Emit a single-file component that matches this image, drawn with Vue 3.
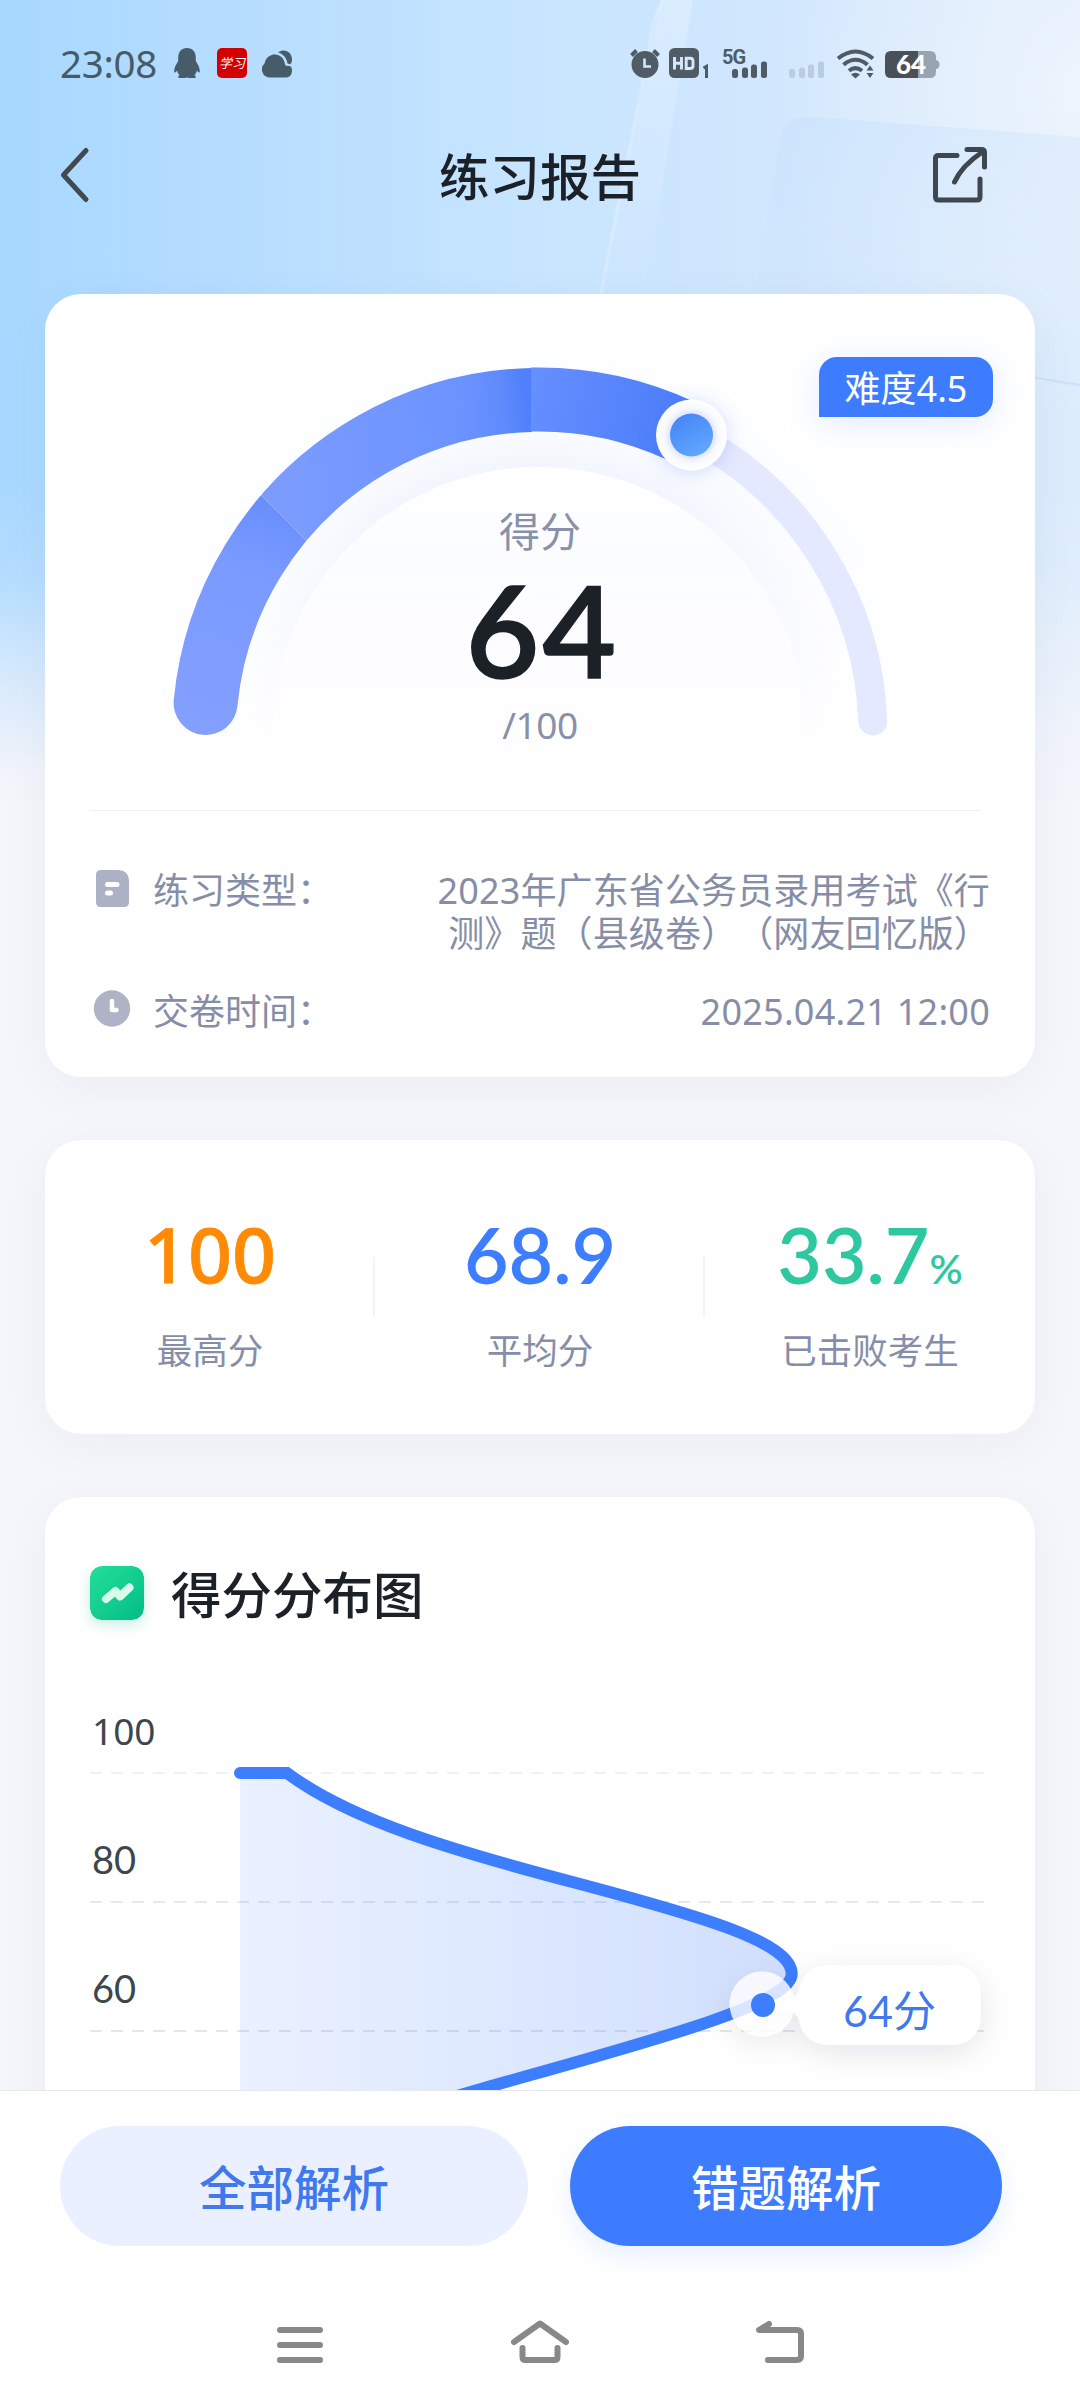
<script setup>
const stats = [
  { value: '100', unit: '', label: '最高分', tone: 'orange' },
  { value: '68.9', unit: '', label: '平均分', tone: 'blue' },
  { value: '33.7', unit: '%', label: '已击败考生', tone: 'green' }
]

const gridLines = [
  { label: '100', y: 1773, cls: 'plain', opacity: 0.55 },
  { label: '80', y: 1902, cls: 'humanist', opacity: 0.9 },
  { label: '60', y: 2031, cls: 'humanist', opacity: 1 }
]

const curve = 'M240 1773H287C350 1820 450 1850 580 1884C700 1916 791.7 1942 791.7 1974C791.7 2005 640 2044 481 2089L440 2101'
</script>

<template>
  <div class="page">
    <svg class="backdrop" viewBox="0 0 1080 800" aria-hidden="true">
      <defs>
        <linearGradient id="sky" x1="0" y1="0" x2="1" y2="0">
          <stop offset="0" stop-color="#a8d8ff" />
          <stop offset="0.18" stop-color="#b4dcff" />
          <stop offset="0.5" stop-color="#c8e5ff" />
          <stop offset="0.75" stop-color="#d2e7fd" />
          <stop offset="1" stop-color="#dcecfc" />
        </linearGradient>
        <radialGradient id="glow" gradientUnits="userSpaceOnUse" cx="1090" cy="90" r="330">
          <stop offset="0" stop-color="#f1f6fd" stop-opacity="0.8" />
          <stop offset="1" stop-color="#f1f6fd" stop-opacity="0" />
        </radialGradient>
        <linearGradient id="band" x1="0" y1="0" x2="0" y2="1">
          <stop offset="0" stop-color="#fff" stop-opacity="0.25" />
          <stop offset="1" stop-color="#fff" stop-opacity="0.02" />
        </linearGradient>
        <linearGradient id="pane" gradientUnits="userSpaceOnUse" x1="800" y1="110" x2="850" y2="330">
          <stop offset="0" stop-color="#c6e1fc" stop-opacity="0.5" />
          <stop offset="1" stop-color="#cfe5fb" stop-opacity="0.1" />
        </linearGradient>
        <linearGradient id="fade" x1="0" y1="0" x2="0" y2="1">
          <stop offset="0.6" stop-color="#f4f5fb" stop-opacity="0" />
          <stop offset="0.72" stop-color="#f4f5fb" stop-opacity="0.15" />
          <stop offset="0.86" stop-color="#f4f5fb" stop-opacity="0.65" />
          <stop offset="0.98" stop-color="#f4f5fb" stop-opacity="1" />
        </linearGradient>
      </defs>
      <rect width="1080" height="800" fill="url(#sky)" />
      <rect width="1080" height="500" fill="url(#glow)" />
      <path d="M661 0H693L645 290H600Z" fill="url(#band)" />
      <path d="M664 0C655 12 653 26 650 42C638 110 620 190 600 300" fill="none" stroke="#fff" stroke-opacity="0.22" stroke-width="3" />
      <path d="M755 300L779 142Q784 115 812 117L1080 137V388L1030 382V420H740Z" fill="url(#pane)" />
      <path d="M1030 377L1080 385" stroke="#c2dbf5" stroke-opacity="0.6" stroke-width="2" />
      <rect width="1080" height="800" fill="url(#fade)" />
    </svg>

    <main class="content">
      <div class="status">
        <div class="status-left">
          <span class="clock">23:08</span>
          <svg class="penguin" width="26" height="30" viewBox="0 0 26 30">
            <path fill="#475c69" d="M13 0C7.500 0 4.200 4 4.200 9.500V13C2 16.500 0 20 .2 23.600C.4 25.400 2 24.300 3 22.400C3.500 24.500 4.500 26 5.500 27.200C3.800 28 3.800 30 5.500 30H11L13 29.500L15 30H20.500C22.200 30 22.200 28 20.500 27.200C21.500 26 22.500 24.500 23 22.400C24 24.300 25.600 25.400 25.800 23.600C26 20 24 16.500 21.800 13V9.500C21.800 4 18.500 0 13 0Z" />
          </svg>
          <span class="study">学习</span>
          <svg class="cloud" width="30" height="29" viewBox="0 0 30 29">
            <path fill="#475c69" d="M7.500 28.500A7.500 8 0 0 1 2.500 14.500C4 8 8.500 5.500 13 5.500C18 5.500 22 9 22.800 14.500C23 16.800 25 17.300 27 16.800C29.500 17.500 30 19.500 30 21.500C30 26 27.500 28.500 23.500 28.500Z" />
            <path fill="#475c69" d="M16 3.300C23 -1 30 3 30 11C30 13 29.500 14 28.200 15.200L25.500 14.500C24.500 8.500 21 5 16 3.300Z" />
          </svg>
        </div>
        <svg class="status-right" width="312" height="32" viewBox="629 47 312 32">
          <g fill="#4f5c66">
            <circle cx="645" cy="64.500" r="13.500" />
            <path d="M631.500 55.500L636.500 50.500M658.500 55.500L653.500 50.500" stroke="#4f5c66" stroke-width="4" />
            <path d="M644.500 58.500V66.500H651" fill="none" stroke="#d4e8fd" stroke-width="2.600" />
            <rect x="669" y="48" width="30" height="30" rx="5.500" />
            <path d="M674.500 57V69.500M681.500 57V69.500M674.500 63.200H681.500M686.200 58.200H690Q693 58.200 693 61V66Q693 68.500 690 68.500H686.200Z" fill="none" stroke="#d6e8fb" stroke-width="2.900" />
            <path d="M703.500 68L706.500 66.300V78" fill="none" stroke="#4f5c66" stroke-width="3" />
            <text x="722" y="63.500" class="network">5G</text>
            <rect x="732" y="69" width="6" height="9" rx="2.500" />
            <rect x="742" y="67.500" width="6" height="10.500" rx="2.500" />
            <rect x="751" y="64.500" width="6" height="13.500" rx="2.500" />
            <rect x="761" y="61.500" width="6" height="16.500" rx="2.500" />
          </g>
          <g fill="#b8cddf">
            <rect x="789" y="69" width="6" height="9" rx="2.500" />
            <rect x="799" y="67.500" width="6" height="10.500" rx="2.500" />
            <rect x="808" y="64.500" width="6" height="13.500" rx="2.500" />
            <rect x="818" y="61.500" width="6" height="16.500" rx="2.500" />
          </g>
          <g fill="none" stroke="#4f5c66" stroke-width="4">
            <path d="M838 58.500Q855.500 44.500 873 58.500" />
            <path d="M843.500 64.800Q855.500 54.800 867.500 64.800" />
            <path d="M849 70.800Q855.500 65.500 862 70.800" />
          </g>
          <path d="M851 74.500Q855.500 71 860 74.500L855.500 78.500Z" fill="#4f5c66" />
          <path d="M870 65.500L873.500 70.500H866.500ZM866.500 73H873.500L870 78Z" fill="#4f5c66" />
          <path d="M891 51H918V78H891Q885 78 885 72V57Q885 51 891 51Z" fill="#495057" />
          <path d="M918 51H930Q936 51 936 57V60Q939.500 60.500 939.500 64.500Q939.500 68.500 936 69V72Q936 78 930 78H918Z" fill="#99a4b0" />
          <text x="911" y="74" class="battery">64</text>
        </svg>
      </div>

      <header class="navbar">
        <svg class="back" width="30" height="58" viewBox="60 146 30 58">
          <path d="M86 150.500L63.500 175L86 199.500" fill="none" stroke="#42494f" stroke-width="5" stroke-linecap="round" stroke-linejoin="round" />
        </svg>
        <h1>练习报告</h1>
        <svg class="share" width="56" height="58" viewBox="932 146 56 58">
          <g fill="none" stroke="#3e474f" stroke-width="5" stroke-linecap="round" stroke-linejoin="round">
            <path d="M957 155.500H938.500Q935.500 155.500 935.500 158.500V197Q935.500 200 938.500 200H977Q980 200 980 197V179" />
            <path d="M967 149.500H981.500Q984.500 149.500 984.500 152.500V167" />
            <path d="M954.500 182Q962 165.500 983 151.500" />
          </g>
        </svg>
      </header>

      <section class="card score-card">
        <div class="gauge">
          <svg width="990" height="516" viewBox="45 294 990 516">
            <defs>
              <linearGradient id="segA" gradientUnits="userSpaceOnUse" x1="205" y1="735" x2="284" y2="518">
                <stop offset="0" stop-color="#839fff" />
                <stop offset="0.75" stop-color="#7a9aff" />
                <stop offset="1" stop-color="#6b90fe" />
              </linearGradient>
              <linearGradient id="segB" gradientUnits="userSpaceOnUse" x1="284" y1="480" x2="531" y2="455">
                <stop offset="0" stop-color="#7b9bff" />
                <stop offset="0.75" stop-color="#6b93ff" />
                <stop offset="0.9" stop-color="#608bfd" />
                <stop offset="1" stop-color="#5080fb" />
              </linearGradient>
              <linearGradient id="segC" gradientUnits="userSpaceOnUse" x1="531" y1="400" x2="690" y2="440">
                <stop offset="0" stop-color="#658eff" />
                <stop offset="1" stop-color="#4a7cf9" />
              </linearGradient>
              <linearGradient id="disc" gradientUnits="userSpaceOnUse" x1="0" y1="467" x2="0" y2="790">
                <stop offset="0" stop-color="#fff" />
                <stop offset="0.25" stop-color="#fbfcff" />
                <stop offset="0.65" stop-color="#fdfdff" />
                <stop offset="1" stop-color="#fff" />
              </linearGradient>
              <radialGradient id="halo" gradientUnits="userSpaceOnUse" cx="539" cy="736" r="400">
                <stop offset="0.66" stop-color="#f2f5fe" />
                <stop offset="0.76" stop-color="#fafbff" />
                <stop offset="0.92" stop-color="#fcfdff" />
                <stop offset="1" stop-color="#fff" />
              </radialGradient>
              <linearGradient id="haloFade" gradientUnits="userSpaceOnUse" x1="0" y1="500" x2="0" y2="790">
                <stop offset="0" stop-color="#fff" stop-opacity="0" />
                <stop offset="0.6" stop-color="#fff" stop-opacity="0.65" />
                <stop offset="1" stop-color="#fff" />
              </linearGradient>
              <linearGradient id="knob" x1="0" y1="0" x2="0.6" y2="1">
                <stop offset="0" stop-color="#4382f4" />
                <stop offset="1" stop-color="#5fa6ff" />
              </linearGradient>
              <radialGradient id="knobRing">
                <stop offset="0.58" stop-color="#dfe3fb" />
                <stop offset="0.78" stop-color="#f8f9ff" />
                <stop offset="1" stop-color="#fff" />
              </radialGradient>
              <filter id="knobShadow" x="-60%" y="-60%" width="220%" height="220%">
                <feDropShadow dx="0" dy="2" stdDeviation="9" flood-color="#4a78f0" flood-opacity="0.25" />
              </filter>
              <clipPath id="clipA"><path d="M45 280L262 496L306 540L540 774V810H45Z" /></clipPath>
              <clipPath id="clipB"><path d="M45 280L262 496L306 540L532 766V280Z" /></clipPath>
              <clipPath id="clipC"><path d="M531 280H1000V800H531Z" /></clipPath>
            </defs>
            <path d="M139 805V736A400 400 0 0 1 939 736V805Z" fill="url(#halo)" />
            <rect x="130" y="500" width="820" height="309" fill="url(#haloFade)" />
            <path d="M272 800V734A267 267 0 0 1 806 734V800Z" fill="url(#disc)" />
            <path d="M691.500 435.500A335 335 0 0 1 872.800 721" fill="none" stroke="#e5e9ff" stroke-width="29" stroke-linecap="round" />
            <g fill="none" stroke-width="64" stroke-linecap="round">
              <path d="M205.600 703A335 335 0 0 1 680 431" stroke="url(#segA)" clip-path="url(#clipA)" />
              <path d="M205.600 703A335 335 0 0 1 680 431" stroke="url(#segB)" clip-path="url(#clipB)" />
              <path d="M205.600 703A335 335 0 0 1 680 430.500" stroke="url(#segC)" clip-path="url(#clipC)" stroke-linecap="butt" />
            </g>
            <circle cx="691.500" cy="435" r="35.500" fill="url(#knobRing)" filter="url(#knobShadow)" />
            <circle cx="691.500" cy="435" r="21.500" fill="url(#knob)" />
          </svg>
          <div class="score">
            <span class="score-name">得分</span>
            <strong>64</strong>
            <span class="score-total">/100</span>
          </div>
          <span class="badge">难度4.5</span>
        </div>
        <div class="divider"></div>
        <div class="details">
          <div class="detail">
            <svg width="40" height="40" viewBox="0 0 40 40">
              <path d="M9 1H27Q36.500 2 37 11V33Q37 38 32 38H9Q4 38 4 33V6Q4 1 9 1Z" fill="#adb1c6" />
              <path d="M15.500 15.500H25M15.500 24H18.500" stroke="#fff" stroke-width="5" stroke-linecap="round" />
            </svg>
            <span class="detail-name">练习类型：</span>
            <span class="detail-value">2023年广东省公务员录用考试《行<br>测》题（县级卷）（网友回忆版）</span>
          </div>
          <div class="detail">
            <svg width="40" height="40" viewBox="0 0 40 40">
              <circle cx="20" cy="18.500" r="18.200" fill="#b0b3c6" />
              <path d="M20 11V20H24.500" fill="none" stroke="#fff" stroke-width="4.500" stroke-linecap="round" stroke-linejoin="round" />
            </svg>
            <span class="detail-name">交卷时间：</span>
            <span class="detail-value date">2025.04.21 12:00</span>
          </div>
        </div>
      </section>

      <section class="card stats">
        <div v-for="s in stats" :key="s.label" class="stat">
          <p class="stat-value" :class="s.tone">{{ s.value }}<small v-if="s.unit">{{ s.unit }}</small></p>
          <p class="stat-label">{{ s.label }}</p>
        </div>
      </section>

      <section class="card chart-card">
        <div class="chart-head">
          <svg class="chart-icon" width="54" height="54" viewBox="0 0 54 54">
            <defs>
              <linearGradient id="mint" x1="0" y1="0" x2="1" y2="1">
                <stop offset="0" stop-color="#24df98" />
                <stop offset="1" stop-color="#02bd85" />
              </linearGradient>
            </defs>
            <rect width="54" height="54" rx="12" fill="url(#mint)" />
            <path d="M16 33L25.500 25L30 30.500L39.500 21.500" fill="none" stroke="#d8fbec" stroke-width="8" stroke-linecap="round" stroke-linejoin="round" />
          </svg>
          <h2>得分分布图</h2>
        </div>
        <svg class="chart" width="990" height="461" viewBox="45 1629 990 461">
          <defs>
            <linearGradient id="area" gradientUnits="userSpaceOnUse" x1="240" y1="0" x2="792" y2="0">
              <stop offset="0" stop-color="#3d7eff" stop-opacity="0.11" />
              <stop offset="1" stop-color="#3d7af8" stop-opacity="0.24" />
            </linearGradient>
            <filter id="tipShadow" x="-40%" y="-80%" width="180%" height="260%">
              <feDropShadow dx="0" dy="8" stdDeviation="16" flood-color="#1c2440" flood-opacity="0.1" />
            </filter>
          </defs>
          <g v-for="line in gridLines" :key="line.label">
            <path :d="`M90 ${line.y}H984`" stroke="#e4e6ea" stroke-width="2" stroke-dasharray="12 9" :opacity="line.opacity" />
            <text x="92" :y="line.y - 28" class="axis" :class="line.cls">{{ line.label }}</text>
          </g>
          <path :d="curve + 'H240Z'" fill="url(#area)" />
          <path :d="curve" fill="none" stroke="#3d7eff" stroke-width="12" stroke-linecap="round" />
          <g filter="url(#tipShadow)">
            <circle cx="762" cy="2004" r="32.500" fill="#fff" fill-opacity="0.8" />
            <path d="M763 1999.500H788Q796 1999 799 1990Q804 1965 831 1965H949Q981 1965 981 1997V2013Q981 2045 949 2045H831Q804 2045 799 2020Q796 2011 788 2010.500H763Z" fill="#fff" />
          </g>
          <circle cx="763" cy="2005" r="12" fill="#3d7eff" />
          <text x="889.500" y="2027" class="tip">64分</text>
        </svg>
      </section>
    </main>

    <footer class="footer">
      <div class="actions">
        <button class="btn soft">全部解析</button>
        <button class="btn solid">错题解析</button>
      </div>
      <svg class="system" width="1080" height="60" viewBox="0 2312 1080 60">
        <g fill="none" stroke="#888" stroke-width="6" stroke-linecap="round" stroke-linejoin="round">
          <path d="M280 2330H320M280 2345H320M280 2360H320" />
          <path d="M514 2342L540 2323.500L566 2342" />
          <path d="M522.500 2348V2357Q522.500 2360 525.500 2360H554.500Q557.500 2360 557.500 2357V2348" />
          <path d="M769 2324L759 2330H797Q801 2330 801 2334V2356Q801 2360 797 2360H768" />
        </g>
      </svg>
    </footer>
  </div>
</template>

<style>
body {
  background: #fff;
}
</style>

<style scoped>
.page {
  position: relative;
  width: 1080px;
  height: 2408px;
  overflow: hidden;
  display: flex;
  flex-direction: column;
  background: #f5f6fb;
  font-family: "Noto Sans", "Noto Sans CJK SC", sans-serif;
  text-spacing-trim: space-all;
}

svg {
  display: block;
  flex: none;
}

h1, h2, p {
  margin: 0;
}

.backdrop {
  position: absolute;
  top: 0;
  left: 0;
  width: 1080px;
  height: 800px;
}

.content {
  position: relative;
  height: 2090px;
  overflow: hidden;
}

.status {
  height: 126px;
  padding: 0 139px 0 60px;
  display: flex;
  align-items: center;
  justify-content: space-between;
}

.status-left {
  display: flex;
  align-items: center;
}

.status-right {
  overflow: visible;
}

.clock {
  width: 114px;
  font-size: 38.500px;
  line-height: 52px;
  letter-spacing: -0.3px;
  color: #465a68;
}

.study {
  width: 30px;
  height: 30px;
  margin: 0 15px 0 17px;
  border-radius: 5px;
  background: #d40000;
  color: #fff;
  font-size: 13px;
  font-style: italic;
  line-height: 30px;
  text-align: center;
}

.network {
  font-family: Roboto, sans-serif;
  font-size: 20px;
  font-weight: 700;
  letter-spacing: -1px;
}

.battery {
  font-family: Lato, sans-serif;
  font-size: 26px;
  font-weight: 900;
  fill: #fff;
  text-anchor: middle;
}

.navbar {
  height: 98px;
  padding: 0 92px 0 60px;
  display: grid;
  grid-template-columns: 56px 1fr 56px;
  align-items: center;
}

.navbar h1 {
  padding: 3px 0 0 32px;
  font-size: 50.500px;
  font-weight: 500;
  line-height: 72px;
  text-align: center;
  color: #1c2127;
}

.card {
  margin: 0 45px;
  border-radius: 36px;
  background: #fff;
  box-shadow: 0 10px 50px rgba(40, 50, 90, 0.045);
}

.score-card {
  margin-top: 70px;
  height: 783px;
}

.gauge {
  position: relative;
  height: 516px;
  display: grid;
}

.gauge > svg,
.score {
  grid-area: 1 / 1;
}

.score {
  position: relative;
  display: flex;
  flex-direction: column;
  align-items: center;
  padding-top: 207px;
  color: #8990a9;
}

.score-name {
  font-size: 41px;
  line-height: 60px;
}

.score strong {
  margin-top: 1px;
  padding-left: 5px;
  font-family: Lato, sans-serif;
  font-size: 127px;
  font-weight: 600;
  line-height: 134px;
  letter-spacing: 3px;
  color: #1c2127;
  -webkit-text-stroke: 1.500px #1c2127;
}

.score-total {
  margin-top: 2px;
  font-size: 37px;
  line-height: 54px;
  letter-spacing: -0.5px;
}

.badge {
  position: absolute;
  top: 63px;
  right: 42px;
  width: 174px;
  height: 60px;
  border-radius: 18px 18px 18px 0;
  background: #3d7cff;
  box-shadow: 0 6px 36px rgba(61, 124, 255, 0.16);
  color: #fff;
  font-size: 36px;
  line-height: 64px;
  text-align: center;
}

.divider {
  height: 1px;
  margin: 0 54px 0 45px;
  background: #eeeff1;
}

.details {
  padding: 58px 45px 0 47px;
  display: flex;
  flex-direction: column;
  gap: 35px;
}

.detail {
  display: flex;
  align-items: flex-start;
  font-size: 36px;
  line-height: 43px;
  color: #868ea7;
}

.detail-name {
  margin-left: 21px;
  white-space: nowrap;
}

.detail-value {
  margin-left: auto;
  letter-spacing: 0.12px;
  text-align: right;
  white-space: nowrap;
}

.date {
  letter-spacing: 0.25px;
}

.stats {
  margin-top: 63px;
  height: 294px;
  display: grid;
  grid-template-columns: repeat(3, 1fr);
}

.stat {
  display: flex;
  flex-direction: column;
  align-items: center;
  padding-top: 74px;
  background: linear-gradient(#f3f4f7, #f3f4f7) no-repeat right 0 top 117px / 2px 60px;
}

.stat:last-child {
  background: none;
}

.stat-value {
  height: 80px;
  font-family: Lato, sans-serif;
  font-size: 77px;
  font-weight: 600;
  line-height: 80px;
}

.stat-value small {
  font-size: 41px;
  line-height: 0;
}

.stat-label {
  margin-top: 34px;
  font-size: 35.500px;
  line-height: 44px;
  color: #868ea7;
}

.orange {
  font-family: "Noto Sans", sans-serif;
  font-weight: 500;
  color: #ff8a05;
  -webkit-text-stroke: 0.800px #ff8a05;
}

.blue {
  color: #3d7eff;
}

.green {
  color: #2dc89f;
}

.chart-card {
  margin-top: 63px;
  height: 640px;
}

.chart-head {
  height: 132px;
  padding: 60px 45px 0;
  box-sizing: border-box;
  display: flex;
  align-items: center;
  gap: 27px;
}

.chart-icon {
  border-radius: 12px;
  box-shadow: 0 5px 14px rgba(2, 189, 133, 0.22);
}

.chart-head h2 {
  padding-top: 3px;
  font-size: 50.500px;
  font-weight: 500;
  line-height: 72px;
  color: #1c2127;
}

.axis {
  font-size: 37px;
  fill: #3c464f;
}

.humanist {
  font-family: Lato, sans-serif;
  font-size: 38px;
}

.tip {
  font-family: Lato, "Noto Sans CJK SC", sans-serif;
  font-size: 43px;
  fill: #4079ee;
  text-anchor: middle;
}

.footer {
  position: relative;
  height: 318px;
  box-sizing: border-box;
  border-top: 1px solid #e8e9ed;
  background: #fff;
}

.actions {
  padding: 35px 78px 0 60px;
  display: grid;
  grid-template-columns: 468px 432px;
  gap: 42px;
}

.btn {
  height: 120px;
  padding: 3px 0 0;
  border: 0;
  border-radius: 60px;
  font: 500 47.500px/117px "Noto Sans", "Noto Sans CJK SC", sans-serif;
}

.soft {
  background: #eaf0ff;
  color: #4079ee;
}

.solid {
  background: #3d7cff;
  box-shadow: 0 10px 26px rgba(61, 124, 255, 0.12);
  color: #fff;
}

.system {
  margin-top: 66px;
}
</style>
